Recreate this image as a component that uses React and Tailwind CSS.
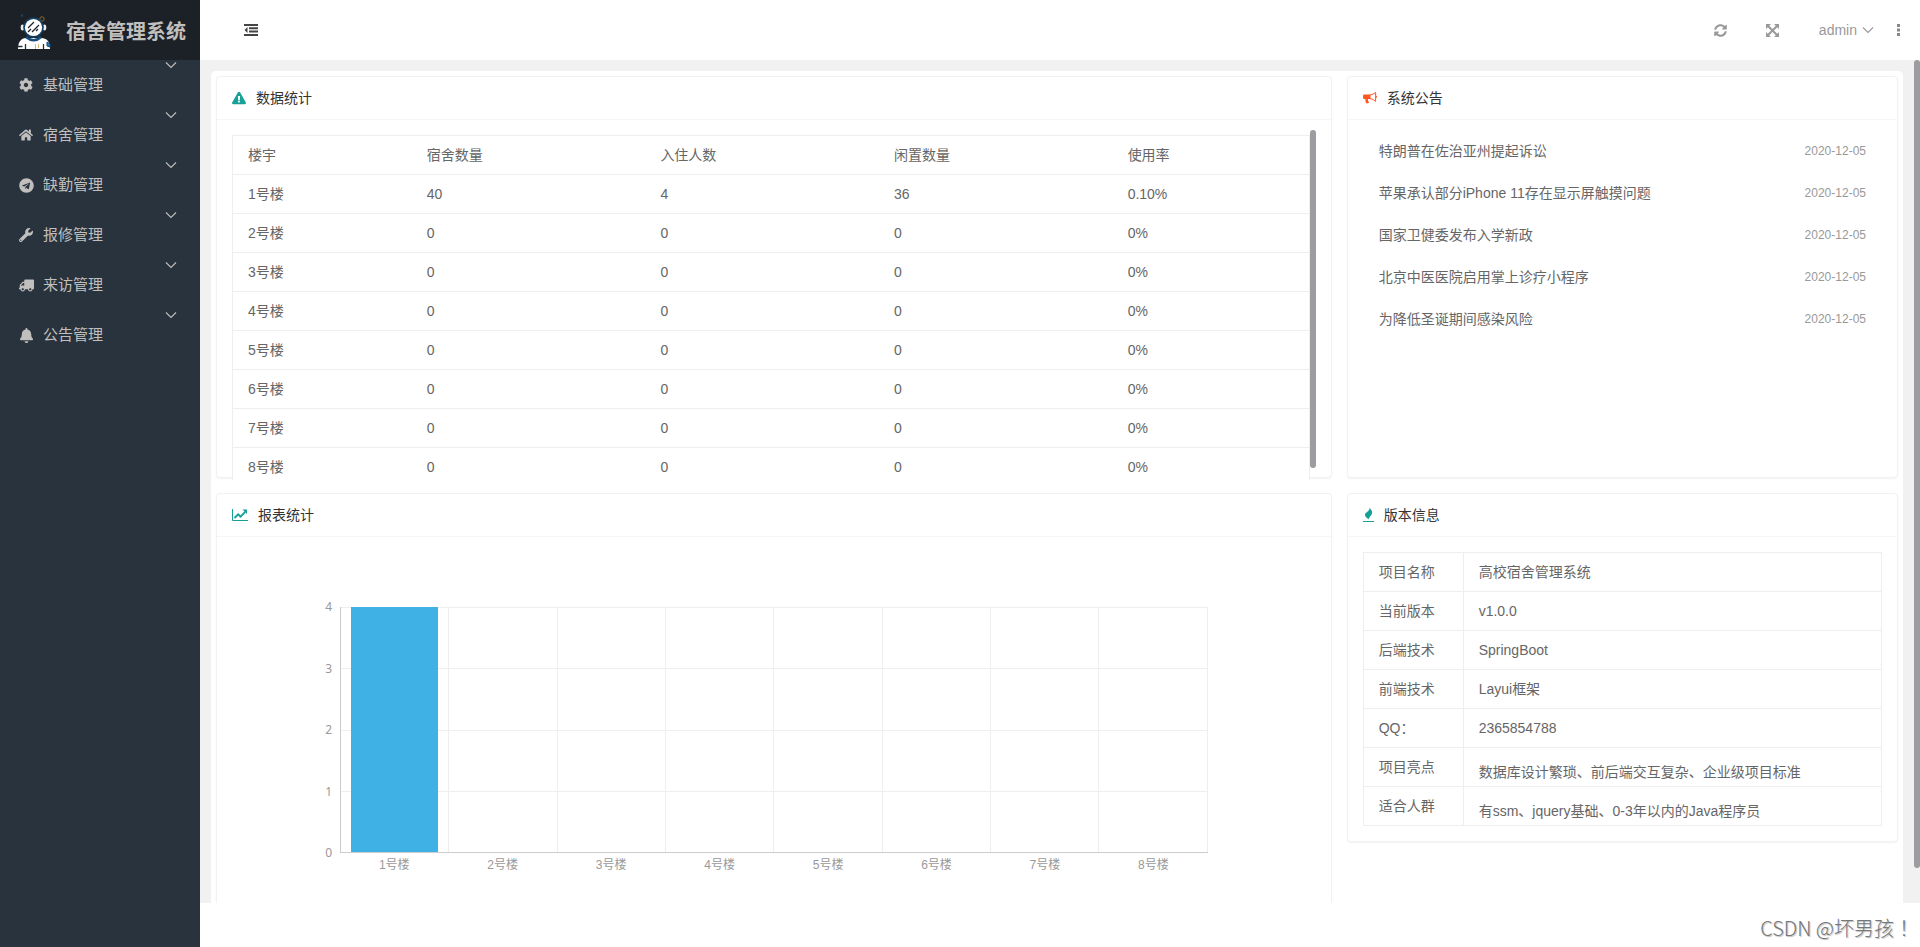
import { useState } from "react";
import { FaCog, FaHome, FaTelegram, FaWrench, FaTruck, FaBell, FaSyncAlt, FaExclamationTriangle } from "react-icons/fa";

const menus = [
  { id: 1, title: "基础管理", icon: <FaCog size={14} /> },
  { id: 2, title: "宿舍管理", icon: <FaHome size={14} /> },
  { id: 3, title: "缺勤管理", icon: <FaTelegram size={15} /> },
  { id: 4, title: "报修管理", icon: <FaWrench size={14} /> },
  { id: 5, title: "来访管理", icon: <FaTruck size={15} className="-scale-x-100" /> },
  { id: 6, title: "公告管理", icon: <FaBell size={15} /> },
];

const columns = ["楼宇", "宿舍数量", "入住人数", "闲置数量", "使用率"];

const buildings = [
  { name: "1号楼", rooms: 40, used: 4, free: 36, rate: "0.10%" },
  { name: "2号楼", rooms: 0, used: 0, free: 0, rate: "0%" },
  { name: "3号楼", rooms: 0, used: 0, free: 0, rate: "0%" },
  { name: "4号楼", rooms: 0, used: 0, free: 0, rate: "0%" },
  { name: "5号楼", rooms: 0, used: 0, free: 0, rate: "0%" },
  { name: "6号楼", rooms: 0, used: 0, free: 0, rate: "0%" },
  { name: "7号楼", rooms: 0, used: 0, free: 0, rate: "0%" },
  { name: "8号楼", rooms: 0, used: 0, free: 0, rate: "0%" },
];

const notices = [
  { title: "特朗普在佐治亚州提起诉讼", date: "2020-12-05" },
  { title: "苹果承认部分iPhone 11存在显示屏触摸问题", date: "2020-12-05" },
  { title: "国家卫健委发布入学新政", date: "2020-12-05" },
  { title: "北京中医医院启用掌上诊疗小程序", date: "2020-12-05" },
  { title: "为降低圣诞期间感染风险", date: "2020-12-05" },
];

const versions = [
  { label: "项目名称", value: "高校宿舍管理系统" },
  { label: "当前版本", value: "v1.0.0" },
  { label: "后端技术", value: "SpringBoot" },
  { label: "前端技术", value: "Layui框架" },
  { label: "QQ：", value: "2365854788" },
  { label: "项目亮点", value: "数据库设计繁琐、前后端交互复杂、企业级项目标准", low: true },
  { label: "适合人群", value: "有ssm、jquery基础、0-3年以内的Java程序员", low: true },
];

function Chevron() {
  return (
    <svg width="12" height="8" viewBox="0 0 12 8" fill="none" stroke="currentColor" strokeWidth="1.1">
      <path d="M1 1.500l5 5 5-5" />
    </svg>
  );
}

function Logo() {
  return (
    <svg width="36" height="38" viewBox="0 0 36 38" className="shrink-0">
      <circle cx="26" cy="6" r="2.2" fill="none" stroke="#8a6a35" />
      <path d="M6 1v3M5 2.500h2" stroke="#1d4568" />
      <path d="M2 36c0-7 3-11 8-11h15c6 0 9 4 9 10v1H2z" fill="#fff" />
      <path d="M11 23q6.500 6 13 0l2 2q-8 7-17 0z" fill="#174d7c" />
      <path d="M1.500 33.500h5M9.500 31v5M27.500 31v5" stroke="#23303b" strokeWidth="1.300" />
      <path d="M31 29l3 2v3l-3-1z" fill="#2d79b4" stroke="#174d7c" />
      <path d="M19.500 31v5M22.500 31v4" stroke="#ddb877" />
      <ellipse cx="6.500" cy="14.500" rx="1.800" ry="3" fill="#e8eef2" />
      <ellipse cx="28.500" cy="14.500" rx="1.800" ry="3" fill="#e8eef2" />
      <circle cx="17.500" cy="14.500" r="10.300" fill="#17405f" />
      <circle cx="17.500" cy="14.500" r="8.600" fill="#fff" />
      <path d="M12 15l6-6M12 19l3-3M16 19l7-7M20 18l2-2" stroke="#1b1f24" strokeWidth="1.200" />
    </svg>
  );
}

function BullhornIcon() {
  return (
    <svg width="14" height="14" viewBox="0 0 14 14" fill="#ff5722">
      <path d="M1.300 3.500H7.500v4.500H5c-.4 1.300.4 2.300 1 3.200-.3 1.300-2 1.500-3 .8-.3-1.300-.9-2.500-.6-4H1.300Q0 8 0 6.700V4.800q0-1.300 1.300-1.300z" />
      <path d="M7 4Q10 3.700 12.600 1.500v8.800Q10 8 7 7.600" fill="none" stroke="#ff5722" />
      <path d="M13 4.500q1 .4 1 1.300t-1 1.300z" />
    </svg>
  );
}

function LineChartIcon() {
  return (
    <svg width="16" height="14" viewBox="0 0 16 14" fill="none" stroke="#16a097">
      <path d="M.5 1v11.500H16" />
      <path d="M2.500 10l3.700-3.700 2.300 2.300 4.700-4.700" strokeWidth="1.900" />
      <path d="M10.500 1.500H15V6z" fill="#16a097" stroke="none" />
    </svg>
  );
}

function FireIcon() {
  return (
    <svg width="11" height="14" viewBox="0 0 11 14">
      <path d="M6.500 0c2.400 2.200 3 3.700 2.500 5.600C8.400 8 6 8.800 5.600 11.500 5 10.300 2 9.500 2 6.800 2 4 6.800 3.700 6.500 0z" fill="#16a097" />
      <path d="M0 13h11v1H0z" fill="#16a097" />
    </svg>
  );
}

function OutdentIcon() {
  return (
    <svg width="14" height="12" viewBox="0 0 14 12" fill="#444">
      <path d="M0 0h14v2H0zM5 3.300h9v2H5zM5 6.600h9v2H5zM0 10h14v2H0zM3.500 3v6L.5 6z" />
    </svg>
  );
}

function FullscreenIcon() {
  return (
    <svg width="13" height="13" viewBox="0 0 13 13" fill="currentColor">
      <path d="M0 0h5L0 5zM13 0v5L8 0zM0 13V8l5 5zM13 13H8l5-5z" />
      <path d="M2 2l9 9M11 2l-9 9" stroke="currentColor" strokeWidth="2" />
    </svg>
  );
}

function Card({ icon, title, className = "", children }) {
  return (
    <section className={`bg-white border border-[#f2f2f2] rounded shadow-[0_1px_2px_0_rgba(0,0,0,0.05)] ${className}`}>
      <h2 className="h-[43px] px-[15px] flex items-center gap-2.5 border-b border-[#f6f6f6] text-sm text-[#333]">
        {icon}
        {title}
      </h2>
      {children}
    </section>
  );
}

function BarChart({ data }) {
  const max = 4;
  const ticks = [4, 3, 2, 1, 0];
  return (
    <div className="pt-[70px] pl-[99px] pr-[123px] text-xs text-[#999]">
      <div className="flex gap-2">
        <div className="h-[246px] w-4 flex flex-col justify-between text-right font-['Noto_Sans',sans-serif]">
          {ticks.map((t) => (
            <span key={t} className="h-0 leading-[0px]">{t}</span>
          ))}
        </div>
        <div className="flex-1">
          <div className="h-[246px] grid grid-rows-4 border-l border-b border-[#ccc]">
            {/* grid lines sit behind the bars */}
            <div className="col-start-1 row-start-1 row-span-4 grid grid-rows-4">
              {ticks.slice(1).map((t) => (
                <div key={t} className="border-t border-[#eee]" />
              ))}
            </div>
            <div className="col-start-1 row-start-1 row-span-4 grid grid-cols-8">
              {data.map((d) => (
                <div key={d.name} className="border-r border-[#eee] flex items-end justify-center">
                  <div className="w-[81%] bg-[#40b1e4]" style={{ height: `${(d.used / max) * 100}%` }} />
                </div>
              ))}
            </div>
          </div>
          <div className="grid grid-cols-8 pt-1 text-center">
            {data.map((d) => (
              <span key={d.name}>{d.name}</span>
            ))}
          </div>
        </div>
      </div>
    </div>
  );
}

export default function App() {
  const [active, setActive] = useState(null);

  return (
    <div className="h-screen flex overflow-hidden bg-white font-['Liberation_Sans','Noto_Sans_CJK_SC',sans-serif] text-sm text-[#666]">

      {/* SIDEBAR */}
      <aside className="w-[200px] shrink-0 bg-[#28333e] text-[#c1bfbd]">
        <div className="h-[60px] pl-4 pt-1 flex items-center gap-3.5 bg-[#1b2127]">
          <Logo />
          <h1 className="text-xl font-bold whitespace-nowrap">宿舍管理系统</h1>
        </div>
        <nav>
          {menus.map((m) => (
            <button
              key={m.id}
              type="button"
              onClick={() => setActive(active === m.id ? null : m.id)}
              className="w-full h-[50px] pl-[19px] pr-[23px] flex text-[15px]"
            >
              <span className="h-full flex-1 flex items-center gap-2.5">
                <span className="w-3.5">{m.icon}</span>
                {m.title}
              </span>
              <span className="pt-px"><Chevron /></span>
            </button>
          ))}
        </nav>
      </aside>

      <div className="flex-1 min-w-0 flex flex-col">

        {/* TOP BAR */}
        <header className="h-[60px] shrink-0 pl-11 pr-5 flex items-center justify-between text-[#999]">
          <button type="button" aria-label="收起菜单"><OutdentIcon /></button>
          <div className="flex items-center">
            <button type="button" aria-label="刷新" className="mr-[39px]"><FaSyncAlt size={13} /></button>
            <button type="button" aria-label="全屏" className="mr-10"><FullscreenIcon /></button>
            <button type="button" className="flex items-center gap-[5px] mr-[23px]">
              admin
              <Chevron />
            </button>
            <button type="button" aria-label="更多">
              <svg width="3" height="12" viewBox="0 0 3 12" fill="#888">
                <path d="M0 0h3v3H0zM0 4.500h3v3H0zM0 9h3v3H0z" />
              </svg>
            </button>
          </div>
        </header>

        {/* PAGE */}
        <div className="flex-1 min-h-0 flex bg-[#f1f1f1] mb-11 overflow-hidden">
          <main className="flex-1 min-w-0 mt-[11px] ml-[11px] mr-[11px] p-[5px] bg-white rounded-t-[5px] grid grid-cols-[minmax(0,1115fr)_minmax(0,551fr)] gap-x-[15px] gap-y-[15px] items-start content-start">

            <Card icon={<FaExclamationTriangle size={14} className="text-[#16a097]" />} title="数据统计" className="h-[402px]">
              <div className="h-[360px] pt-[15px] px-[15px] flex items-start overflow-hidden">
                <table className="flex-1 w-full table-fixed border-collapse border border-[#eee] bg-white">
                  <colgroup>
                    <col className="w-[16.65%]" />
                    <col className="w-[21.7%]" />
                    <col className="w-[21.7%]" />
                    <col className="w-[21.7%]" />
                    <col />
                  </colgroup>
                  <thead>
                    <tr className="h-[39px] border-b border-[#eee]">
                      {columns.map((c) => (
                        <th key={c} className="px-[15px] text-left font-normal">{c}</th>
                      ))}
                    </tr>
                  </thead>
                  <tbody>
                    {buildings.map((b) => (
                      <tr key={b.name} className="h-[39px] border-b border-[#eee]">
                        <td className="px-[15px]">{b.name}</td>
                        <td className="px-[15px]">{b.rooms}</td>
                        <td className="px-[15px]">{b.used}</td>
                        <td className="px-[15px]">{b.free}</td>
                        <td className="px-[15px]">{b.rate}</td>
                      </tr>
                    ))}
                  </tbody>
                </table>
                <div className="w-1.5 h-[338px] -mt-[5px] shrink-0 rounded-full bg-[#9c9da0]" />
              </div>
            </Card>

            <Card icon={<BullhornIcon />} title="系统公告" className="h-[402px]">
              <ul className="px-[31px] pt-2.5">
                {notices.map((n) => (
                  <li key={n.title} className="h-[42px] flex items-center justify-between">
                    <a href="#notice">{n.title}</a>
                    <time className="text-xs text-[#999]">{n.date}</time>
                  </li>
                ))}
              </ul>
            </Card>

            <Card icon={<LineChartIcon />} title="报表统计" className="h-[500px]">
              <BarChart data={buildings} />
            </Card>

            <Card icon={<FireIcon />} title="版本信息">
              <div className="p-[15px]">
                <table className="w-full table-fixed border-collapse border border-[#eee]">
                  <tbody>
                    {versions.map((v) => (
                      <tr key={v.label} className="h-[39px] border-b border-[#eee]">
                        <th className="w-[100px] px-[15px] border-r border-[#eee] text-left font-normal">{v.label}</th>
                        <td className={v.low ? "px-[15px] pt-2.5" : "px-[15px]"}>{v.value}</td>
                      </tr>
                    ))}
                  </tbody>
                </table>
              </div>
            </Card>

          </main>
          <div className="w-1.5 h-[808px] shrink-0 rounded-full bg-[#9c9da0]" />
        </div>
      </div>

      <div className="absolute right-1.5 bottom-[5px] text-xl text-[#777] font-['Noto_Sans_CJK_TC',sans-serif] font-light [text-shadow:1px_1px_1px_#bbb]">CSDN @坏男孩！</div>
    </div>
  );
}
